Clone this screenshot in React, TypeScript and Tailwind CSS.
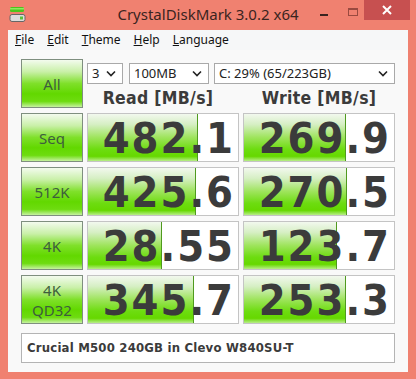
import React from "react";

const numFont = { fontFamily: '"DejaVu Sans Condensed", "DejaVu Sans", sans-serif' };

function Chevron() {
  return (
    <svg width="10" height="7" viewBox="0 0 10 7" className="shrink-0">
      <path d="M1 1.5 L5 5.5 L9 1.5" fill="none" stroke="#222" strokeWidth="1.6" />
    </svg>
  );
}

function Select({ w, text }: { w: string; text: string }) {
  return (
    <div
      className={`${w} h-[21px] bg-white border border-[#a9a9a9] flex items-center justify-between pl-[4px] pr-[6px] text-[13px] text-[#222]`}
      style={{ fontFamily: '"Noto Sans", sans-serif' }}
    >
      <span className="leading-none">{text}</span>
      <Chevron />
    </div>
  );
}

function LabelBtn({ children }: { children: React.ReactNode }) {
  return (
    <div
      className="h-[49px] border border-[#7f8f7f] bg-[linear-gradient(to_bottom,#f3fbee_0%,#c9f0a8_25%,#7fe02a_50%,#62d800_72%,#6edc10_88%,#c6f2a0_100%)] flex flex-col items-center justify-center text-[15px] leading-[20px] text-[#3d5e3d]"
      style={{ fontFamily: '"Noto Sans", sans-serif' }}
    >
      {children}
    </div>
  );
}

function ValueCell({ value, bar }: { value: string; bar: number }) {
  return (
    <div className="relative h-[49px] bg-white border border-[#c4c4c4] overflow-hidden">
      <div
        className="absolute left-0 top-0 bottom-0 border-r border-[#4f9a1e] bg-[linear-gradient(to_bottom,#f2f8ee_0%,#d6efc4_22%,#9ee45c_50%,#6ddc10_75%,#66d800_90%,#b8ee88_100%)]"
        style={{ width: bar }}
      />
      <div
        className="relative h-full flex items-center justify-end pr-[3px] pt-[2px] text-[43px] font-bold leading-none tracking-[2px] text-[#3b3b3b]"
        style={numFont}
      >
        {value}
      </div>
    </div>
  );
}

const rows = [
  { label: <span>Seq</span>, r: "482.1", rb: 110, w: "269.9", wb: 102 },
  { label: <span>512K</span>, r: "425.6", rb: 108, w: "270.5", wb: 103 },
  { label: <span>4K</span>, r: "28.55", rb: 74, w: "123.7", wb: 93 },
  {
    label: (
      <>
        <span>4K</span>
        <span>QD32</span>
      </>
    ),
    r: "345.7",
    rb: 106,
    w: "253.3",
    wb: 102,
  },
];

export default function App() {
  return (
    <div className="w-[416px] h-[379px] bg-[#f08170] flex flex-col overflow-hidden">
      {/* Title bar */}
      <div className="relative h-[30px] shrink-0 flex items-center justify-center">
        <svg className="absolute left-[9px] top-[6px]" width="17" height="17" viewBox="0 0 17 17">
          <rect x="1" y="1" width="14" height="5" rx="1.5" fill="#4cc41c" />
          <rect x="1" y="2" width="14" height="1.5" fill="#8fe860" />
          <rect x="1" y="8.5" width="15" height="7" rx="2" fill="#dcdcdc" stroke="#666" strokeWidth="1" />
          <rect x="11" y="10.5" width="3" height="3" fill="#5bc23a" />
        </svg>
        <span className="text-[15px] text-[#3a2420] pb-[1px]" style={{ fontFamily: '"Noto Sans", sans-serif' }}>
          CrystalDiskMark 3.0.2 x64
        </span>
        <div className="absolute left-[320px] top-[14px] w-[8px] h-[2px] bg-[#3a2420]" />
        <div className="absolute left-[348px] top-[8px] w-[10px] h-[8px] border border-[#9a4a40] border-t-2" />
        <div className="absolute left-[364px] top-0 w-[46px] h-[20px] bg-[#c75050] flex items-center justify-center">
          <svg width="10" height="10" viewBox="0 0 10 10">
            <path d="M1 1 L9 9 M9 1 L1 9" stroke="#fff" strokeWidth="2" />
          </svg>
        </div>
      </div>

      {/* Client */}
      <div className="mx-[8px] h-[342px] bg-[#f9f9f9] flex flex-col">
        {/* Menu */}
        <div
          className="h-[20px] bg-[#f6f7f8] flex items-center pl-[7px] text-[12px] text-[#111] gap-[13px]"
          style={{ fontFamily: '"Noto Sans", sans-serif' }}
        >
          <span><span className="underline">F</span>ile</span>
          <span><span className="underline">E</span>dit</span>
          <span><span className="underline">T</span>heme</span>
          <span><span className="underline">H</span>elp</span>
          <span><span className="underline">L</span>anguage</span>
        </div>

        <div className="pl-[13px] pt-[9px]">
          <div className="grid grid-cols-[62px_152px_152px] gap-x-[4px] gap-y-[5px]">
            <LabelBtn>All</LabelBtn>
            <div className="col-span-2 flex flex-col">
              <div className="flex items-center mt-[4px] gap-[6px]">
                <Select w="w-[36px]" text="3" />
                <Select w="w-[80px]" text="100MB" />
                <Select w="w-[181px] ml-[-1px]" text="C: 29% (65/223GB)" />
              </div>
              <div
                className="flex mt-[6px] text-[17.5px] font-bold text-[#3b3b3b] leading-none tracking-[0.3px]"
                style={numFont}
              >
                <div className="w-[152px] text-center pr-[10px]">Read [MB/s]</div>
                <div className="w-[4px]" />
                <div className="w-[152px] text-center">Write [MB/s]</div>
              </div>
            </div>
            {rows.map((r, i) => (
              <React.Fragment key={i}>
                <LabelBtn>{r.label}</LabelBtn>
                <ValueCell value={r.r} bar={r.rb} />
                <ValueCell value={r.w} bar={r.wb} />
              </React.Fragment>
            ))}
          </div>
          <div
            className="mt-[9px] w-[374px] h-[30px] bg-white border border-[#b4b4b4] flex items-center pl-[5px] text-[13px] font-bold tracking-[0.2px] text-[#3b3b3b]"
            style={numFont}
          >
            Crucial M500 240GB in Clevo W840SU-T
          </div>
        </div>
      </div>
    </div>
  );
}
